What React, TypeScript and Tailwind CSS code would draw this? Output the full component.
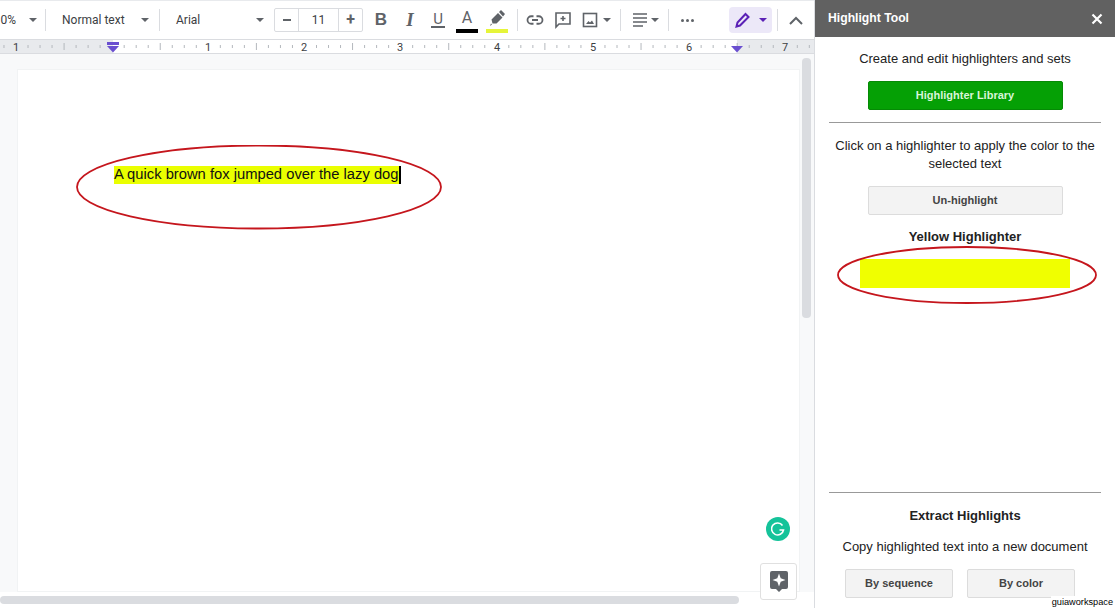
const rulerNums = [
  { label: "1", x: 16 },
  { label: "1", x: 208 },
  { label: "2", x: 304 },
  { label: "3", x: 400 },
  { label: "4", x: 497 },
  { label: "5", x: 593 },
  { label: "6", x: 689 },
  { label: "7", x: 785 },
];

function Sep({ className = "" }: { className?: string }) {
  return <div className={`w-px h-[22px] bg-[#dadce0] shrink-0 ${className}`} />;
}

function Caret({ className = "" }: { className?: string }) {
  return <div className={`w-0 h-0 shrink-0 border-x-[4px] border-x-transparent border-t-[4px] border-t-[#5f6368] ${className}`} />;
}

function Ruler() {
  const ticks: { x: number; h: number }[] = [];
  for (let i = -1; i < 75; i++) {
    const x = 16 + i * 12.02;
    ticks.push({ x, h: i % 8 === 0 ? 0 : i % 4 === 0 ? 7 : 3 });
  }
  return (
    <svg width="814" height="13" className="block">
      <rect x="0" y="0" width="113" height="13" fill="#e8eaed" />
      <rect x="737" y="0" width="77" height="13" fill="#e8eaed" />
      {ticks.filter((t) => t.h > 0).map((t, i) => (
        <line key={i} x1={t.x} x2={t.x} y1={6.5 - t.h / 2} y2={6.5 + t.h / 2} stroke="#b4b8bd" strokeWidth="1" />
      ))}
      <rect x="107" y="2" width="12" height="3" fill="#6a4fd0" />
      <path d="M107 6h12l-6 6.500z" fill="#6a4fd0" />
      <path d="M731 6h12l-6 6.500z" fill="#6a4fd0" />
      {rulerNums.map((n, i) => (
        <text key={i} x={n.x} y="10.500" fontSize="11" textAnchor="middle" fill="#3c4043" fontFamily="Roboto, sans-serif">{n.label}</text>
      ))}
    </svg>
  );
}

function Toolbar() {
  return (
    <div className="h-[39px] border-t border-[#e8eaed] flex items-center text-[12px] text-[#3c4043] font-['Roboto',sans-serif] overflow-hidden">
      <span className="w-[16px] shrink-0 text-right">0%</span>
      <Caret className="ml-[13px]" />
      <Sep className="ml-[8px]" />
      <span className="ml-[16px] w-[72px] shrink-0">Normal text</span>
      <Caret className="ml-[7px]" />
      <Sep className="ml-[10px]" />
      <span className="ml-[16px] w-[72px] shrink-0">Arial</span>
      <Caret className="ml-[8px]" />
      <div className="ml-[10px] w-[89px] h-[24px] shrink-0 flex items-stretch border border-[#dadce0] rounded-[2px]">
        <div className="w-[24px] flex items-center justify-center border-r border-[#dadce0]"><div className="w-[8px] h-[2px] bg-[#5f6368]" /></div>
        <div className="flex-1 flex items-center justify-center">11</div>
        <div className="w-[24px] flex items-center justify-center border-l border-[#dadce0] text-[16px] leading-none font-bold text-[#5f6368]">+</div>
      </div>
      <span className="ml-[11px] w-[14px] shrink-0 text-center text-[17px] font-bold text-[#5f6368] font-['Liberation_Sans',sans-serif]">B</span>
      <span className="ml-[15px] w-[14px] shrink-0 text-center text-[19px] italic font-bold text-[#5f6368] font-['Liberation_Serif',serif]">I</span>
      <span className="ml-[14px] w-[14px] shrink-0 text-center text-[15px] leading-[14px] text-[#5f6368] border-b-2 border-[#5f6368]">U</span>
      <div className="ml-[11px] w-[22px] shrink-0 self-start mt-[8px] flex flex-col items-center">
        <span className="text-[16px] leading-[18px] h-[18px] text-[#5f6368]">A</span>
        <div className="w-[22px] h-[4px] bg-black mt-[2px]" />
      </div>
      <div className="ml-[8px] w-[22px] shrink-0 self-start mt-[8px] flex flex-col items-center">
        <svg width="18" height="18" viewBox="0 0 18 18">
          <path d="M2 17l2-1.500-1-1zM4.500 14.500l-1-4L10 4l4.500 4.500-6 6zM11 3l2-2 4 4-2 2.500z" fill="#5f6368" />
        </svg>
        <div className="w-[22px] h-[4px] bg-[#e6f53a] mt-[2px]" />
      </div>
      <Sep className="ml-[9px]" />
      <svg className="ml-[8px] shrink-0" width="18" height="18" viewBox="0 0 24 24" fill="none" stroke="#5f6368" strokeWidth="2.400">
        <path d="M10 7H7a5 5 0 000 10h3M14 7h3a5 5 0 010 10h-3M8 12h8" />
      </svg>
      <svg className="ml-[10px] shrink-0" width="18" height="18" viewBox="0 0 18 18" fill="none" stroke="#5f6368" strokeWidth="1.600">
        <path d="M2 2h14v11H5l-3 3zM9 5v5M6.500 7.500h5" />
      </svg>
      <svg className="ml-[10px] shrink-0" width="16" height="16" viewBox="0 0 16 16" fill="none" stroke="#5f6368" strokeWidth="1.600">
        <rect x="1.500" y="1.500" width="13" height="13" />
        <path d="M4 12l2.500-3 1.500 1.500L10 8.500l2 3.500z" fill="#5f6368" stroke="none" />
      </svg>
      <Caret className="ml-[5px]" />
      <Sep className="ml-[9px]" />
      <svg className="ml-[12px] shrink-0" width="15" height="14" viewBox="0 0 15 14" stroke="#5f6368" strokeWidth="1.600">
        <path d="M0 1h14M0 5h14M0 9h14M0 13h10" />
      </svg>
      <Caret className="ml-[3px]" />
      <Sep className="ml-[9px]" />
      <div className="ml-[12px] flex gap-[2px] shrink-0">
        <div className="w-[3px] h-[3px] rounded-full bg-[#5f6368]" />
        <div className="w-[3px] h-[3px] rounded-full bg-[#5f6368]" />
        <div className="w-[3px] h-[3px] rounded-full bg-[#5f6368]" />
      </div>
      <div className="ml-[35px] w-[43px] h-[26px] rounded-[4px] bg-[#ece8f8] flex items-center justify-center gap-[8px] shrink-0">
        <svg width="16" height="16" viewBox="0 0 16 16" fill="none" stroke="#5b21b6" strokeWidth="2">
          <path d="M1.500 14.500l1-4 8-8.500 3 3-8.500 8.500z" />
        </svg>
        <div className="w-0 h-0 border-x-[4px] border-x-transparent border-t-[4px] border-t-[#5b21b6]" />
      </div>
      <Sep className="ml-[5px]" />
      <svg className="ml-[11px] shrink-0" width="14" height="9" viewBox="0 0 14 9" fill="none" stroke="#5f6368" strokeWidth="2">
        <path d="M1 8l6-6 6 6" />
      </svg>
    </div>
  );
}

function DocArea() {
  return (
    <div className="relative flex-1 bg-white overflow-hidden">
      <div className="h-[538px] bg-[#f8f9fa] pl-[17px] pt-[15px]">
        <div className="bg-white h-[523px] w-[783px] border border-[#f1f3f4] pt-[96px] pl-[96px]">
          <p className="font-['Liberation_Sans',sans-serif] text-[14.75px] leading-[17px] text-[#111] flex">
            <span className="bg-[#eaff00]">A quick brown fox jumped over the lazy dog</span>
            <span className="w-[2px] h-[18px] bg-black" />
          </p>
        </div>
      </div>
      {/* red hand-drawn ring */}
      <svg className="absolute left-[76px] top-[91px]" width="366" height="86" viewBox="0 0 366 86" fill="none">
        <ellipse cx="183" cy="42" rx="182" ry="41.5" stroke="#c5161d" strokeWidth="1.800" />
      </svg>
      {/* scrollbars */}
      <div className="absolute left-[802px] top-[4px] w-[9px] h-[260px] rounded-[4px] bg-[#dadce0]" />
      <div className="absolute left-0 bottom-[4px] w-[739px] h-[8px] rounded-[4px] bg-[#dadce0]" />
      {/* grammarly */}
      <div className="absolute left-[766px] top-[463px] w-[24px] h-[24px] rounded-full bg-[#15c39a] flex items-center justify-center">
        <svg width="14" height="14" viewBox="0 0 14 14" fill="none" stroke="white" strokeWidth="1.600">
          <path d="M11.500 3.500A6 6 0 1012.500 8H8.500" />
        </svg>
      </div>
      {/* explore */}
      <div className="absolute left-[760px] top-[509px] w-[37px] h-[37px] bg-white border border-[#e0e0e0] rounded-[3px] flex items-center justify-center">
        <svg width="18" height="21" viewBox="0 0 18 21">
          <path d="M2 0h14a2 2 0 012 2v14a2 2 0 01-2 2h-4l-3 3-3-3H2a2 2 0 01-2-2V2a2 2 0 012-2z" fill="#5f6368" />
          <path d="M9 2.500l1.700 4.800 4.800 1.700-4.800 1.700L9 15.500l-1.700-4.800L2.500 9l4.800-1.700z" fill="white" />
        </svg>
      </div>
    </div>
  );
}

function Btn({ label, className }: { label: string; className: string }) {
  return (
    <div className={`h-[29px] rounded-[2px] border border-[#dcdcdc] bg-[#f3f3f3] flex items-center justify-center text-[11px] font-bold text-[#444] ${className}`}>
      {label}
    </div>
  );
}

function Sidebar() {
  return (
    <div className="relative w-[301px] shrink-0 h-full bg-white border-l border-[#dadce0] flex flex-col font-['Liberation_Sans',sans-serif] text-[13px] text-[#222]">
      <div className="h-[37px] bg-[#616161] flex items-center justify-between pl-[13px] pr-[12px] text-white font-bold text-[12.2px]">
        <span>Highlight Tool</span>
        <svg width="12" height="12" viewBox="0 0 12 12" stroke="white" strokeWidth="2.200"><path d="M1.500 1.500l9 9M10.500 1.500l-9 9" /></svg>
      </div>
      <div className="px-[14px] flex flex-col items-center flex-1">
        <p className="mt-[14px] leading-[15px]">Create and edit highlighters and sets</p>
        <div className="mt-[15px] w-[195px] h-[29px] rounded-[2px] bg-[#05a005] border border-[#058a05] text-[#d8f5d8] flex items-center justify-center text-[11px] font-bold">
          Highlighter Library
        </div>
        <div className="mt-[12px] w-full h-px bg-[#999]" />
        <p className="mt-[14px] leading-[18px] text-center">Click on a highlighter to apply the color to the selected text</p>
        <Btn label="Un-highlight" className="mt-[13px] w-[195px]" />
        <p className="mt-[14px] font-bold leading-[16px]">Yellow Highlighter</p>
        <div className="mt-[14px] w-[210px] h-[29px] bg-[#f0ff00]" />
        <div className="flex-1" />
        <div className="w-full h-px bg-[#999]" />
        <p className="mt-[15px] font-bold leading-[16px]">Extract Highlights</p>
        <p className="mt-[15px] leading-[16px]">Copy highlighted text into a new document</p>
        <div className="mt-[14px] mb-[10px] self-start ml-[16px] flex gap-[14px]">
          <Btn label="By sequence" className="w-[108px]" />
          <Btn label="By color" className="w-[108px]" />
        </div>
      </div>
      <svg className="absolute left-[22px] top-[246px]" width="260" height="58" viewBox="0 0 260 58" fill="none">
        <ellipse cx="130" cy="29" rx="129" ry="28" stroke="#c5161d" strokeWidth="1.800" />
      </svg>
      <span className="absolute right-[1px] bottom-0 text-[9.2px] leading-[12px] text-black bg-white px-px">guiaworkspace</span>
    </div>
  );
}

export default function App() {
  return (
    <div className="w-[1115px] h-[608px] flex overflow-hidden bg-white">
      <div className="w-[814px] shrink-0 h-full flex flex-col">
        <Toolbar />
        <div className="border-y border-[#dadce0]">
          <Ruler />
        </div>
        <DocArea />
      </div>
      <Sidebar />
    </div>
  );
}
